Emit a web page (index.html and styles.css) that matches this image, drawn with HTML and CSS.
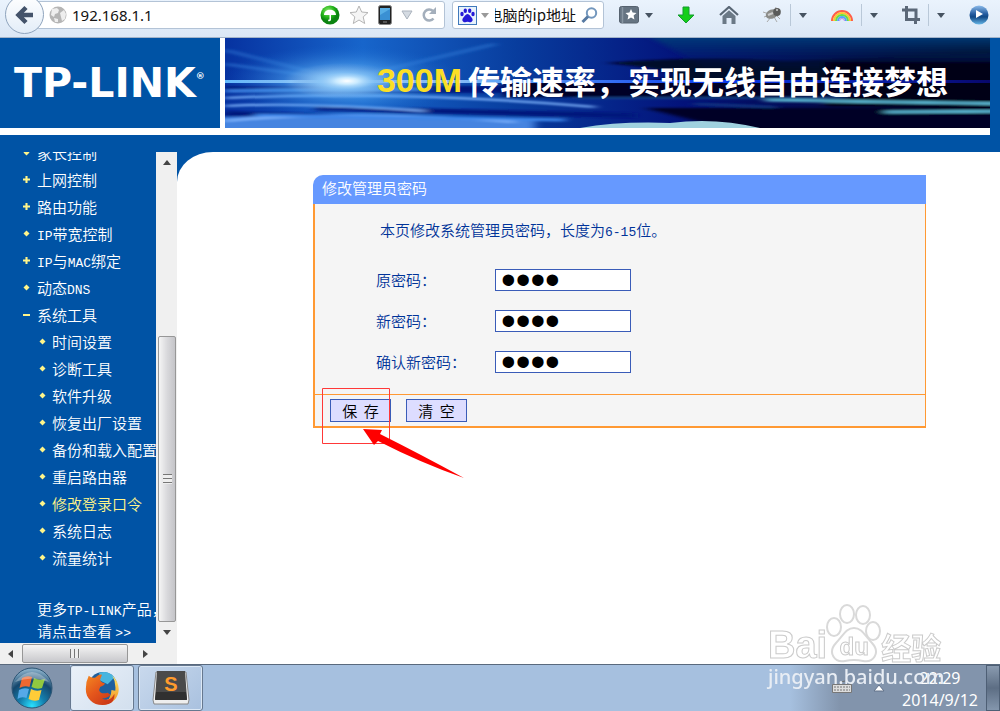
FILE: index.html
```html
<!DOCTYPE html>
<html lang="zh-CN">
<head>
<meta charset="utf-8">
<title>TP-LINK 修改管理员密码</title>
<link rel="stylesheet" href="styles.css">
</head>
<body>
<div class="toolbar">
  <button class="back" aria-label="后退"><svg width="20" height="20" viewBox="0 0 20 20"><path d="M18 10H4M11 2.500L3.500 10L11 17.500" fill="none" stroke="#44536a" stroke-width="4.500"/></svg></button>
  <div class="urlbar">
    <svg width="18" height="18" viewBox="0 0 18 18"><circle cx="9" cy="9" r="8.500" fill="#b5b5b5"/><path d="M3 3l5-1 2 2-1 3-3 1-1 3-3-2zM11 7l4-3 2 4-1 5-3 2-1-4zM5 12l4 1v3l-3 0z" fill="#eee"/></svg>
    <input class="url" type="text" aria-label="地址" value="192.168.1.1">
    <svg width="20" height="20" viewBox="0 0 20 20"><defs><radialGradient id="gb" cx=".4" cy=".3"><stop offset="0" stop-color="#8ef06c"/><stop offset=".7" stop-color="#1faf17"/><stop offset="1" stop-color="#0b8411"/></radialGradient></defs><circle cx="10" cy="10" r="9.500" fill="url(#gb)"/><path d="M4 10c0-7 12-7 12 0H11v5q-1 2-3 1l.5-1.500H9.500V10z" fill="#fff"/></svg>
    <svg width="20" height="20" viewBox="0 0 20 20"><path d="M10 1l2.700 6 6.300.6-4.800 4.300 1.500 6.600L10 15l-5.700 3.500 1.500-6.600L1 7.600 7.300 7z" fill="#f5f5f5" stroke="#b5b5b5"/></svg>
    <svg width="14" height="20" viewBox="0 0 14 20"><rect x=".5" y=".5" width="13" height="19" rx="2" fill="#222" stroke="#888"/><path d="M2 3h10v12H2z" fill="#57aee6"/><path d="M2 10l10-6v11H2z" fill="#3a90d3"/><path d="M5 17h4" stroke="#888"/></svg>
    <svg width="12" height="10" viewBox="0 0 12 10"><path d="M1 1h10L6 9z" fill="#d5dbe2" stroke="#abb3bd"/></svg>
    <svg width="15" height="16" viewBox="0 0 15 16"><path d="M11.500 11.500A5.500 5.500 0 1 1 11 4" fill="none" stroke="#a4afbc" stroke-width="2.500"/><path d="M14 0v7H7z" fill="#a4afbc"/></svg>
  </div>
  <div class="search">
    <svg width="19" height="19" viewBox="0 0 19 19"><rect x=".5" y=".5" width="18" height="18" fill="#e8f2fc" stroke="#3f79bc"/><g fill="#2419d8"><ellipse cx="4" cy="8" rx="1.700" ry="2.300"/><ellipse cx="7.300" cy="4.700" rx="1.700" ry="2.300"/><ellipse cx="11.700" cy="4.700" rx="1.700" ry="2.300"/><ellipse cx="15" cy="8" rx="1.700" ry="2.300"/><path d="M9.500 8c2 0 3 2.500 4.500 4 2 3-1 5-3 4q-1.500-.5-3 0c-2 1-5-1-3-4 1.500-1.500 2.500-4 4.500-4z"/></g></svg>
    <i class="caret light"></i>
    <div class="query"><input type="text" aria-label="搜索" value="电脑的ip地址"></div>
    <svg width="17" height="17" viewBox="0 0 17 17"><circle cx="10.500" cy="6" r="4.700" fill="none" stroke="#7397bd" stroke-width="2"/><path d="M7 9.500L1.500 15" stroke="#5679a1" stroke-width="3"/></svg>
  </div>
  <div class="tools">
    <button class="tool" aria-label="书签"><svg width="20" height="18" viewBox="0 0 20 18"><rect x=".5" y=".5" width="19" height="16.500" rx="2" fill="#667482" stroke="#56626f"/><path d="M3.500 1v16" stroke="#8996a2" stroke-width="1.500"/><path d="M12 3l1.600 3.500 3.900.4-2.900 2.700.8 4L12 11.500l-3.400 2.100.8-4-2.900-2.700 3.900-.4z" fill="#fff"/></svg><i class="caret"></i></button>
    <button class="tool" aria-label="下载"><svg width="18" height="18" viewBox="0 0 18 18"><path d="M6 1h6v8h5l-8 8-8-8h5z" fill="#13ce18" stroke="#149a30"/></svg></button>
    <button class="tool" aria-label="主页"><svg width="20" height="18" viewBox="0 0 20 18"><path d="M1 9L10 1l9 8" fill="none" stroke="#596775" stroke-width="2.200"/><path d="M3.500 10L10 4.300l6.500 5.700v8h-4v-6h-5v6h-4z" fill="#6b7986"/></svg></button>
    <button class="tool" aria-label="插件"><svg width="20" height="18" viewBox="0 0 20 18"><path d="M1 6l6 2M2 11l6-2M5 16l4-5M12 11l3 5M14 9l4 4M13 4l1-3" stroke="#aaa"/><ellipse cx="10" cy="8" rx="6.500" ry="4.500" fill="#8b8c89" transform="rotate(-22 10 8)"/><ellipse cx="15" cy="6" rx="3.800" ry="4" fill="#5a5b5a"/><path d="M6 9l5-2" stroke="#ccc" stroke-width="2"/><circle cx="15" cy="4" r="1" fill="#ccc"/></svg><b></b><i class="caret"></i></button>
    <button class="tool" aria-label="彩虹"><svg width="22" height="14" viewBox="0 0 22 14" fill="none" stroke-width="2"><path d="M1 13a10 10 0 0 1 20 0" stroke="#ff5d48"/><path d="M3 13a8 8 0 0 1 16 0" stroke="#ffc52d"/><path d="M5 13a6 6 0 0 1 12 0" stroke="#67df45"/><path d="M7 13a4 4 0 0 1 8 0" stroke="#58a5f8"/><path d="M8.500 13a2.500 2.500 0 0 1 5 0" stroke="#bb89ec" stroke-width="1"/></svg><b></b><i class="caret"></i></button>
    <button class="tool" aria-label="截图"><svg width="18" height="18" viewBox="0 0 18 18" fill="none" stroke="#5b6878" stroke-width="3"><path d="M0 4h14v10M4.500 0v13.500H18M13.500 12v6"/></svg><b></b><i class="caret"></i></button>
    <button class="tool" aria-label="播放"><svg width="20" height="20" viewBox="0 0 20 20"><defs><linearGradient id="pb" x2="0" y2="1"><stop offset="0" stop-color="#8dbceb"/><stop offset=".45" stop-color="#235b9f"/><stop offset=".6" stop-color="#114987"/><stop offset="1" stop-color="#66b6e7"/></linearGradient></defs><circle cx="10" cy="10" r="9.500" fill="url(#pb)"/><path d="M7 5l7 4-7 4z" fill="#fff"/></svg></button>
  </div>
</div>

<header class="header">
  <div class="masthead">
    <div class="logo"><span>TP-LINK</span><sup>®</sup></div>
    <div class="banner">
      <svg class="sky" viewBox="0 0 765 90" preserveAspectRatio="none" aria-hidden="true">
        <defs>
          <linearGradient id="bg"><stop offset="0" stop-color="#0632a0"/><stop offset=".18" stop-color="#1765cb"/><stop offset=".38" stop-color="#083d9e"/><stop offset=".6" stop-color="#03127a"/><stop offset=".85" stop-color="#020638"/><stop offset="1" stop-color="#000212"/></linearGradient>
          <radialGradient id="glow"><stop offset="0" stop-color="#fff"/><stop offset=".2" stop-color="#c8eaff" stop-opacity=".95"/><stop offset=".5" stop-color="#4fa2ee" stop-opacity=".5"/><stop offset="1" stop-color="#1765cb" stop-opacity="0"/></radialGradient>
          <linearGradient id="beam"><stop offset="0" stop-color="#64bcff"/><stop offset=".16" stop-color="#fff"/><stop offset=".35" stop-color="#64a7f5"/><stop offset=".65" stop-color="#0838ee"/><stop offset="1" stop-color="#08086c"/></linearGradient>
          <linearGradient id="top" x2="0" y2="1"><stop offset="0" stop-color="#06417e"/><stop offset="1" stop-color="#06205d" stop-opacity="0"/></linearGradient>
          <filter id="soft" x="-20%" y="-80%" width="140%" height="260%"><feGaussianBlur stdDeviation="5 1"/></filter>
        </defs>
        <path fill="url(#bg)" d="M0 0h765v90H0z"/>
        <g filter="url(#soft)">
          <path fill="#02072c" d="M380 25q100-8 180-2l245-9v45q-180 8-310-3l-140-6q170-12 25-25z"/>
          <path fill="url(#top)" d="M420-4h380v34H480z"/>
          <path fill="#000314" d="M600 24h205v71H480q140-25 270-27H600z"/>
          <path fill="#02147b" d="M0 48h380v7H0zM90 68l320 7v5L90 73zM0 73l110 3v6L0 78z"/>
          <path fill="#000425" d="M280 44h360v15H280zM420 70h385v20H500z"/>
          <path fill="#4584e0" d="M-20 80q150-8 330 3v12H-20z"/>
          <path d="M0 60q180-8 370 9M0 68q80-4 200 5M0 83q130-12 290 1" stroke="#83b8ff" stroke-width="2" fill="none"/>
          <path d="M0 53l200-2M30 77l310 5" stroke="#3d86e9" stroke-width="3"/>
          <path d="M540 62l260 4M660 74l140-1" stroke="#5ab5d0" stroke-width="3"/>
          <path d="M350 60h270M470 66l80 3" stroke="#173f86" stroke-width="2"/>
          <path d="M0 12l118 30L0 26M125 40L270 6" stroke="#3785df" stroke-width="3" fill="none" opacity=".5"/>
        </g>
        <path d="M0 42h765v3H0z" fill="url(#beam)"/>
        <ellipse cx="118" cy="43" rx="120" ry="36" fill="url(#glow)"/>
        <ellipse cx="122" cy="43" rx="56" ry="17" fill="url(#glow)"/>
        <path d="M355 90q40-7 90-5 45-6 90 5z" fill="#9fd1df"/>
      </svg>
      <p class="slogan"><strong>300M</strong><span>传输速率，实现无线自由连接梦想</span></p>
    </div>
  </div>
</header>

<div class="workspace">
  <aside class="side">
    <div class="side-row">
      <nav class="nav">
        <ul class="menu">
          <li class="dot"><a href="#">家长控制</a></li>
          <li class="plus"><a href="#">上网控制</a></li>
          <li class="plus"><a href="#">路由功能</a></li>
          <li class="dot"><a href="#"><span class="latin">IP</span>带宽控制</a></li>
          <li class="plus"><a href="#"><span class="latin">IP</span>与<span class="latin">MAC</span>绑定</a></li>
          <li class="dot"><a href="#">动态<span class="latin">DNS</span></a></li>
          <li class="minus"><a href="#">系统工具</a></li>
          <li class="dot sub"><a href="#">时间设置</a></li>
          <li class="dot sub"><a href="#">诊断工具</a></li>
          <li class="dot sub"><a href="#">软件升级</a></li>
          <li class="dot sub"><a href="#">恢复出厂设置</a></li>
          <li class="dot sub"><a href="#">备份和载入配置</a></li>
          <li class="dot sub"><a href="#">重启路由器</a></li>
          <li class="dot sub current"><a href="#">修改登录口令</a></li>
          <li class="dot sub"><a href="#">系统日志</a></li>
          <li class="dot sub"><a href="#">流量统计</a></li>
        </ul>
        <a class="more" href="#">更多<span class="latin">TP-LINK</span>产品，<br>请点击查看 <span class="latin">&gt;&gt;</span></a>
      </nav>
      <div class="vscroll">
        <span class="arrow"><i class="tri up"></i></span>
        <span class="before"></span>
        <span class="thumb"><i class="grip"></i></span>
        <span class="arrow"><i class="tri down"></i></span>
      </div>
    </div>
    <div class="hscroll">
      <span class="arrow"><i class="tri left"></i></span>
      <span class="thumb"><i class="grip"></i></span>
      <span class="arrow"><i class="tri right"></i></span>
    </div>
  </aside>
  <main class="content">
    <form class="panel">
      <h1>修改管理员密码</h1>
      <div class="fields">
        <p>本页修改系统管理员密码，长度为<span class="latin">6-15</span>位。</p>
        <div class="field"><label for="old">原密码：</label><input id="old" type="password" value="1234"></div>
        <div class="field"><label for="new">新密码：</label><input id="new" type="password" value="1234"></div>
        <div class="field"><label for="again">确认新密码：</label><input id="again" type="password" value="1234"></div>
      </div>
      <div class="actions">
        <div class="save">
          <button type="button">保&nbsp; 存</button>
          <svg class="mark" width="150" height="96" viewBox="0 0 150 96" aria-hidden="true"><path d="M.5.5h67v55H.5z" fill="none" stroke="#ff3838"/><path d="M41 41l19 1-2 4q40 20 84 44-43-15-86-37l-4 4z" fill="#f00"/></svg>
        </div>
        <button type="reset">清&nbsp; 空</button>
      </div>
    </form>
  </main>
</div>

<footer class="taskbar">
  <div class="start"><button aria-label="开始"><svg width="42" height="42" viewBox="0 0 42 42"><defs><radialGradient id="orb" cx=".5" cy=".95" r=".9"><stop offset="0" stop-color="#29e2ff"/><stop offset=".35" stop-color="#147fae"/><stop offset=".7" stop-color="#15476d"/><stop offset="1" stop-color="#84abc5"/></radialGradient></defs><circle cx="21" cy="21" r="20" fill="url(#orb)" stroke="#2e5675"/><path d="M11 11q5-3 10-1l-2.500 10q-5-2-10 1z" fill="#ef6831"/><path d="M23 11q5 3 11 1l-3 9q-5 2-10.500-1z" fill="#91c840"/><path d="M8 23q5-3 10-1l-2.500 9q-5-2-9 1z" fill="#55a9e8"/><path d="M20 22q5 3 10.500 1L28 33q-5 2-10.500-1z" fill="#ffcc38"/><path d="M4 15q17-20 34 0Q21 8 4 15z" fill="#fff" opacity=".3"/></svg></button></div>
  <button class="task active" aria-label="Firefox"><svg width="36" height="36" viewBox="0 0 38 38"><defs><linearGradient id="fox" x2=".8" y2="1"><stop offset="0" stop-color="#f48a21"/><stop offset=".5" stop-color="#e5571c"/><stop offset="1" stop-color="#c93617"/></linearGradient><linearGradient id="tail" x2="0" y2="1"><stop offset="0" stop-color="#ffe96a"/><stop offset="1" stop-color="#f08a1c"/></linearGradient></defs><circle cx="20" cy="17" r="15" fill="#1e5f9e"/><path d="M16 3q10-3 16 5l-7 7-8-4z" fill="#48b5df"/><path d="M30 6c9 8 9 22-1 28q-5 3-10 3 10-6 10-16l4 1q1-9-3-16z" fill="url(#tail)"/><path d="M5 6q3 3 7 2 4-4 7-3l-2 5q0 3 5 4 0 2-5 4l-1 3q1 5 9 3l3 2q-3 4-9 4 9 4 13-5 1 8-6 11C12 40 1 31 2 19q0-7 3-13z" fill="url(#fox)"/></svg></button>
  <button class="task" aria-label="Sublime Text"><svg width="38" height="36" viewBox="0 0 38 36"><path d="M4 2h30l3 28-1 4H2l-1-4z" fill="#eee" stroke="#888"/><path d="M5 1h28l2 28H3z" fill="#4a4a4a"/><path d="M4 22h30l1 8H3z" fill="#303030"/><text x="19" y="21" text-anchor="middle" class="sublime">S</text></svg></button>
  <div class="tray">
    <svg class="keys" width="20" height="14" viewBox="0 0 20 14"><path d="M9 4q0-3 4-3" fill="none" stroke="#6a6a6a"/><path d="M.5 4.500h19v8H.5z" fill="#ddd" stroke="#777"/><path d="M2 7h16M2 10h16" stroke="#777" stroke-dasharray="2 1"/></svg>
    <svg class="keys" width="12" height="8" viewBox="0 0 12 8"><path d="M1 7l5-6 5 6z" fill="#fff" stroke="#63728a"/></svg>
    <div class="clock"><time>22:29</time><time>2014/9/12</time></div>
    <button class="desktop" aria-label="显示桌面"></button>
  </div>
</footer>

<div class="watermark">
  <div class="brand"><span class="bai">Bai</span><span class="paw"><svg width="58" height="60" viewBox="0 0 58 60" fill="#fff" stroke="#d9d9d9" stroke-width="2"><ellipse cx="9" cy="24" rx="7" ry="9"/><ellipse cx="22" cy="11" rx="7" ry="9"/><ellipse cx="38" cy="12" rx="7" ry="9"/><ellipse cx="48" cy="28" rx="7" ry="9"/><path d="M29 25c8 0 11 8 18 15 9 10 1 20-9 18q-9-2-18 0c-10 2-18-8-9-18 7-7 10-15 18-15z"/></svg><em>du</em></span><span class="exp">经验</span></div>
  <div class="site">jingyan.baidu.com</div>
</div>
</body>
</html>
```
FILE: styles.css
```css
* { box-sizing: border-box; }

body {
  margin: 0;
  min-height: 100vh;
  display: flex;
  flex-direction: column;
  background: #fff;
  font: 350 15px/22px "Noto Sans CJK SC", sans-serif;
  overflow: hidden;
}

button { padding: 0; border: 0; background: none; font: inherit; color: inherit; }
input { min-width: 0; border: 0; padding: 0; background: none; }
a { color: inherit; text-decoration: none; }
svg { display: block; flex: none; }

.latin { font-family: "Liberation Mono", monospace; font-size: 13px; font-weight: 400; line-height: 1; }

/* Browser toolbar */
.toolbar {
  display: flex;
  align-items: flex-start;
  height: 38px;
  padding: 1px 11px 0 5px;
  background: linear-gradient(#eaf3fd, #dbe7f5);
  border-bottom: 1px solid #a3b4c9;
}
.back {
  position: relative;
  flex: none;
  display: grid;
  place-items: center;
  width: 39px;
  height: 39px;
  margin-top: -6px;
  border: 1px solid #8fa4bd;
  border-radius: 50%;
  background: linear-gradient(#fff, #e3edf8);
}
.urlbar, .search {
  display: flex;
  align-items: center;
  height: 28px;
  background: #fff;
  border: 1px solid #b3c3d6;
  border-radius: 3px;
}
.urlbar { flex: 1; gap: 9px; margin-left: -8px; padding: 0 7px 0 12px; }
.urlbar .url { flex: 1; margin-left: -4px; font: 400 15px/22px "Noto Sans", sans-serif; color: #111; }
.search { width: 152px; margin-left: 7px; padding: 0 5px; }
.query { display: flex; justify-content: flex-end; flex: 1; margin: 0 5px 0 6px; min-width: 0; overflow: hidden; }
.query input { flex: none; width: 92px; text-align: right; font: 400 15px/22px "Noto Sans CJK SC", sans-serif; color: #111; }
.caret { flex: none; border: 4px solid transparent; border-top: 5px solid #465361; border-bottom: 0; }
.caret.light { margin-left: 4px; border-top-color: #999; }
.tools { display: flex; justify-content: space-between; flex: none; width: 385px; padding-left: 15px; }
.tool { display: flex; align-items: center; gap: 8px; height: 28px; }
.tool:first-child { gap: 6px; }
.tool b { width: 1px; height: 22px; background: #b9c8d8; }

/* Router header */
.header { background: #0053a5; padding-right: 10px; }
.masthead { display: flex; gap: 5px; padding-bottom: 7px; background: #fff; }
.logo {
  display: flex;
  align-items: center;
  flex: none;
  width: 220px;
  height: 90px;
  padding-left: 14px;
  background: #0053a5;
  color: #fff;
  font: 700 41px/40px "DejaVu Sans", sans-serif;
}
.logo sup { align-self: flex-start; margin-top: 32px; font-size: 9px; line-height: 12px; }
.banner { display: grid; flex: 1; min-width: 0; height: 90px; overflow: hidden; }
.banner > * { grid-area: 1 / 1; }
.sky { width: 100%; height: 90px; }
.slogan {
  z-index: 1;
  display: flex;
  align-items: center;
  justify-content: flex-end;
  gap: 6px;
  margin: 0;
  padding: 0 42px 6px 0;
  white-space: nowrap;
  color: #fff;
  font: 700 32px/40px "Noto Sans CJK SC", sans-serif;
}
.slogan strong { color: #fbdf25; font: 700 34px/40px "Liberation Sans", sans-serif; }

/* Workspace */
.workspace { flex: 1; display: flex; min-height: 0; padding-top: 17px; background: #0053a5; }
.side { display: flex; flex-direction: column; flex: none; width: 177px; color: #fff; }
.side-row { display: flex; flex: 1; min-height: 0; }
.nav { flex: 1; min-width: 0; height: 491px; overflow: hidden; white-space: nowrap; }
.menu { list-style: none; margin: -13px 0 0; padding: 0; }
.menu li { display: flex; align-items: center; height: 27px; padding-left: 23px; }
.menu li::before { flex: none; width: 7px; margin-right: 7px; height: 7px; content: ""; background: #fff58a; }
.menu .dot::before { clip-path: polygon(50% 7%, 93% 50%, 50% 93%, 7% 50%); }
.menu .plus::before { clip-path: polygon(35% 0, 65% 0, 65% 35%, 100% 35%, 100% 65%, 65% 65%, 65% 100%, 35% 100%, 35% 65%, 0 65%, 0 35%, 35% 35%); }
.menu .minus::before { height: 2px; }
.menu .sub { padding-left: 39px; }
.menu .sub::before { margin-right: 6px; }
.menu .current a { color: #fff58a; }
.more { display: block; margin: 27px 0 0 37px; }

.vscroll { display: flex; flex-direction: column; width: 21px; background: #f0f0f0; }
.hscroll { display: flex; height: 21px; padding-right: 21px; background: #f0f0f0; }
.arrow { display: grid; place-items: center; flex: none; width: 21px; height: 21px; }
.before { flex: 163; }
.thumb { display: grid; place-items: center; border: 1px solid #979797; border-radius: 2px; }
.vscroll .thumb { flex: 285; margin: 0 1px 0 2px; background: linear-gradient(90deg, #f5f5f5, #d9d9dc 50%, #c4c4c8); }
.hscroll .thumb { width: 106px; margin: 1px 0 1px 1px; background: linear-gradient(#f5f5f5, #dedee0 50%, #c8c8cc); }
.hscroll .arrow:last-child { margin-left: auto; }
.grip { width: 9px; height: 10px; background: repeating-linear-gradient(#777 0 1px, #eee 1px 4px); }
.hscroll .grip { width: 10px; height: 9px; background: repeating-linear-gradient(90deg, #777 0 1px, #eee 1px 4px); }
.tri { border: 4px solid transparent; }
.up { border-top: 0; border-bottom: 5px solid #444; }
.down { border-bottom: 0; border-top: 5px solid #444; }
.left { border-left: 0; border-right: 5px solid #444; }
.right { border-right: 0; border-left: 5px solid #444; }

.content { flex: 1; min-width: 0; padding: 23px 74px 0 136px; background: #fff; border-radius: 36px 0 0 0 / 30px 0 0 0; }
.panel { color: #003399; }
.panel h1 {
  margin: 0;
  height: 29px;
  padding-left: 9px;
  border-radius: 10px 0 0 0;
  background: #6699ff;
  color: #fff;
  font: inherit;
  line-height: 26px;
}
.fields { display: grid; gap: 19px; padding: 15px 0 21px 61px; background: #f5f5f5; border: solid #ff9933; border-width: 0 1px 0 2px; }
.fields p { margin: 0 0 9px 4px; height: 22px; }
.field { display: flex; align-items: center; height: 22px; }
.field label { width: 119px; }
.field input {
  width: 136px;
  height: 22px;
  padding: 0 5px;
  background: #fff;
  border: 1px solid #3a5cb8;
  color: #000;
  font: 400 42px/20px "Liberation Sans", sans-serif;
}
.actions { display: flex; gap: 15px; padding: 4px 0 4px 15px; background: #f5f5f5; border: 1px solid #ff9933; border-width: 1px 1px 2px 2px; }
.actions button { display: block; width: 61px; height: 23px; border: 1px solid #3a5cb8; background: #ddf; color: #000; line-height: 20px; }
.save { position: relative; }
.mark { position: absolute; left: -8px; top: -11px; pointer-events: none; }

/* Taskbar */
.taskbar { display: flex; height: 47px; border-top: 1px solid #59697d; background: linear-gradient(90deg, #a6c0df 79%, #8294ac 84%); color: #fff; }
.start { display: grid; place-items: center; width: 70px; padding-right: 6px; background: #8294ac; }
.task { display: grid; place-items: center; width: 65px; margin-right: 4px; border: 1px solid #66788f; border-radius: 3px; background: linear-gradient(135deg, #c9d9ed, #a9c1df); box-shadow: inset 0 0 0 1px #dce8f5; }
.task.active { width: 64px; background: linear-gradient(135deg, #eaf1f9, #d2dfee); }
.sublime { font: 700 20px "Liberation Sans", sans-serif; fill: #ff9b2d; }
.tray { display: flex; margin-left: auto; }
.keys { margin: 15px 21px 0 0; }
.keys + .keys { margin: 19px 17px 0 0; }
.clock { display: flex; flex-direction: column; align-items: center; padding-top: 2px; margin-right: 8px; font: 400 16px/22px "Noto Sans", sans-serif; }
.desktop { width: 14px; border: 1px solid #4e5f75; background: linear-gradient(#8a9bb0, #5d6e84 50%, #8496ad); }

/* Watermark lies over the page and the taskbar */
.watermark { position: fixed; right: 56px; bottom: 20px; width: 176px; pointer-events: none; }
.brand { display: flex; align-items: flex-end; color: #fff; -webkit-text-stroke: 1px #cbcbcb; white-space: nowrap; }
.bai { font: 700 38px/36px "Liberation Sans", sans-serif; }
.paw { display: grid; place-items: end center; margin: 0 -2px; }
.paw > * { grid-area: 1 / 1; }
.paw em { font: 700 24px/32px "Liberation Sans", sans-serif; z-index: 1; }
.exp { font: 700 30px/34px "Noto Sans CJK SC", sans-serif; }
.site { color: #e8edf4; font: 500 20px/28px "Noto Sans", sans-serif; }
```
